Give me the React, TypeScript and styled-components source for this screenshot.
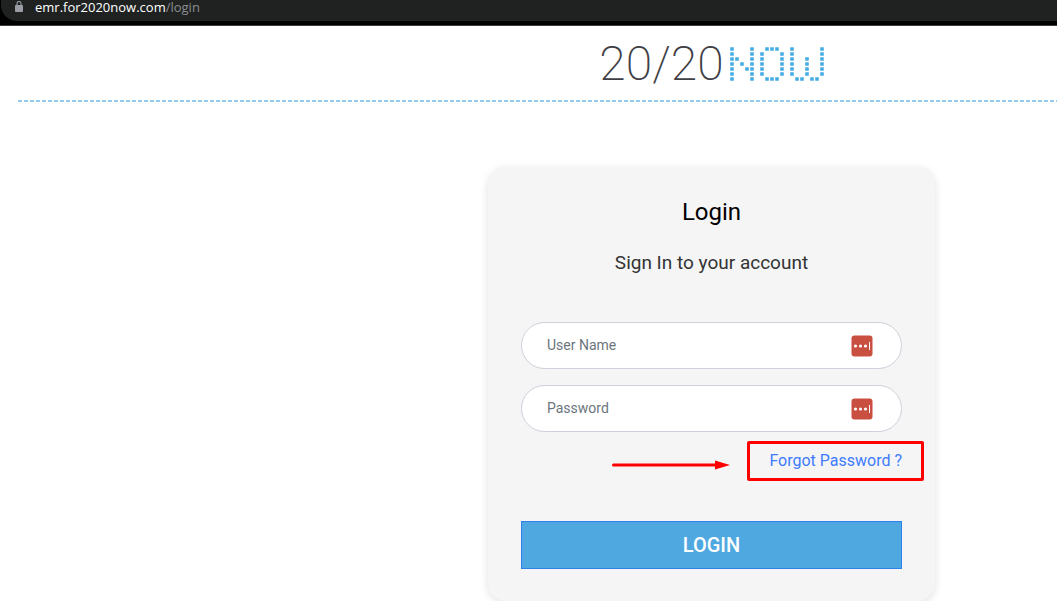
import React from "react";
import styled, { createGlobalStyle } from "styled-components";

const GlobalStyle = createGlobalStyle`
  *, *::before, *::after { box-sizing: border-box; }
  body {
    margin: 0;
    background: #ffffff;
    font-family: Roboto, "Liberation Sans", sans-serif;
    overflow-x: hidden;
  }
`;

const BrowserBar = styled.div`
  height: 26px;
  padding: 0 0 5px 1px;
  background: #000000;
  border-bottom: 1px solid #3c3c3c;
`;

const AddressPill = styled.div`
  display: flex;
  align-items: flex-start;
  gap: 12px;
  height: 21px;
  padding: 0 0 0 14px;
  border-radius: 0 0 0 16px;
  background: #202222;
`;

const LockIcon = styled.svg`
  display: block;
  margin-top: 1px;
`;

const Address = styled.div`
  color: #ffffff;
  font: 13px/14px "Open Sans", "Noto Sans", sans-serif;
`;

const AddressPath = styled.span`
  color: #8b8d91;
`;

const Header = styled.header`
  display: flex;
  justify-content: center;
  margin-left: 18px;
  padding: 15px 0 16px 348px;
  background: repeating-linear-gradient(90deg, #93ccec 0 4px, transparent 4px 6px) left bottom / 100% 2px no-repeat;
`;

const Logo = styled.div`
  display: flex;
  align-items: center;
  gap: 6px;
  height: 45px;
`;

const LogoNumber = styled.span`
  color: #3f4045;
  font: 200 48px/44px Roboto, sans-serif;
`;

const Main = styled.main`
  display: flex;
  justify-content: center;
  padding: 65px 0 0 366px;
`;

const Card = styled.form`
  width: 100%;
  max-width: 447px;
  padding: 29px 33px 32px;
  border-radius: 18px;
  background: #f5f5f5;
  box-shadow: 0 2px 8px rgba(0, 0, 0, 0.12);
`;

const Title = styled.h1`
  margin: 0;
  color: #000000;
  font-size: 24px;
  font-weight: 400;
  line-height: 32px;
  text-align: center;
`;

const Subtitle = styled.p`
  margin: 23px 0 47px;
  color: #333333;
  font-size: 19px;
  line-height: 24px;
  text-align: center;
`;

const Field = styled.label`
  display: flex;
  align-items: center;
  height: 47px;
  margin-bottom: 16px;
  padding: 0 28px 0 25px;
  border: 1px solid #ced0da;
  border-radius: 24px;
  background: #ffffff;
`;

const Input = styled.input`
  flex: 1;
  min-width: 0;
  padding: 0 0 2px;
  border: 0;
  outline: 0;
  background: transparent;
  color: #333333;
  font: 14px/20px Roboto, sans-serif;
  &::placeholder { color: #6c757d; opacity: 1; }
`;

const ForgotRow = styled.div`
  position: relative;
  display: flex;
  justify-content: flex-end;
  align-items: center;
  height: 24px;
  margin: 17px 0 48px;
`;

const ForgotLink = styled.a`
  color: #3d7bff;
  font-size: 16px;
  line-height: 24px;
  text-decoration: none;
`;

const Highlight = styled.span`
  position: absolute;
  top: -8px;
  right: -22px;
  width: 177px;
  height: 40px;
  border: 3px solid #ff0000;
  border-radius: 2px;
  pointer-events: none;
`;

const Arrow = styled.svg`
  position: absolute;
  top: 11px;
  right: 172px;
`;

const LoginButton = styled.button`
  display: block;
  width: 100%;
  height: 48px;
  padding: 0;
  border: 1px solid #2f80ed;
  background: #4fa8e0;
  color: #ffffff;
  font: 500 20px/24px Roboto, sans-serif;
  cursor: pointer;
`;

const DOT_ROWS = [
  "X...X..XXX..X.....X",
  "X...X.X...X.X.....X",
  "XX..X.X...X.X..X..X",
  "X.X.X.X...X.X..X..X",
  "X..XX.X...X.X..X..X",
  "X...X.X...X.X..X..X",
  "X...X..XXX...XX.XX.",
];

function DotMark() {
  return (
    <svg width="94" height="34" viewBox="0 0 94 34" role="img" aria-label="NOW">
      {DOT_ROWS.flatMap((row, y) =>
        [...row].map((cell, x) =>
          cell === "X" ? (
            <rect key={`${x}-${y}`} x={x * 5 + 0.2} y={y * 5 + 0.2} width="3.6" height="3.6" rx="0.4" fill="#46ade4" />
          ) : null
        )
      )}
    </svg>
  );
}

function PasswordManagerIcon() {
  return (
    <svg width="22" height="22" viewBox="0 0 22 22" aria-hidden="true">
      <rect x="0.5" y="0.5" width="21" height="21" rx="3" fill="#c94f40" />
      <circle cx="4.5" cy="11" r="1.6" fill="#fff" />
      <circle cx="9.5" cy="11" r="1.6" fill="#fff" />
      <circle cx="14.5" cy="11" r="1.6" fill="#fff" />
      <rect x="18" y="7" width="1" height="8" fill="#fff" />
    </svg>
  );
}

export default function App() {
  return (
    <>
      <GlobalStyle />
      <BrowserBar>
        <AddressPill>
          <LockIcon width="8" height="12" viewBox="0 0 8 12" aria-hidden="true">
            <path d="M2 5V2.5a2 2 0 0 1 4 0V5" fill="none" stroke="#9a9da5" strokeWidth="1.1" />
            <rect y="4" width="8" height="7" rx="0.8" fill="#9a9da5" />
          </LockIcon>
          <Address>
            emr.for2020now.com<AddressPath>/login</AddressPath>
          </Address>
        </AddressPill>
      </BrowserBar>
      <Header>
        <Logo>
          <LogoNumber>20/20</LogoNumber>
          <DotMark />
        </Logo>
      </Header>
      <Main>
        <Card onSubmit={(e: React.FormEvent) => e.preventDefault()}>
          <Title>Login</Title>
          <Subtitle>Sign In to your account</Subtitle>
          <Field>
            <Input type="text" placeholder="User Name" aria-label="User Name" />
            <PasswordManagerIcon />
          </Field>
          <Field>
            <Input type="password" placeholder="Password" aria-label="Password" />
            <PasswordManagerIcon />
          </Field>
          <ForgotRow>
            <Arrow width="118" height="10" viewBox="0 0 118 10" aria-hidden="true">
              <path d="M1.5 5H104" stroke="#ff0000" strokeWidth="3" strokeLinecap="round" />
              <path d="M103 0.5L118 5L103 9.5Z" fill="#ff0000" />
            </Arrow>
            <ForgotLink href="#forgot">Forgot Password ?</ForgotLink>
            <Highlight />
          </ForgotRow>
          <LoginButton type="submit">LOGIN</LoginButton>
        </Card>
      </Main>
    </>
  );
}
